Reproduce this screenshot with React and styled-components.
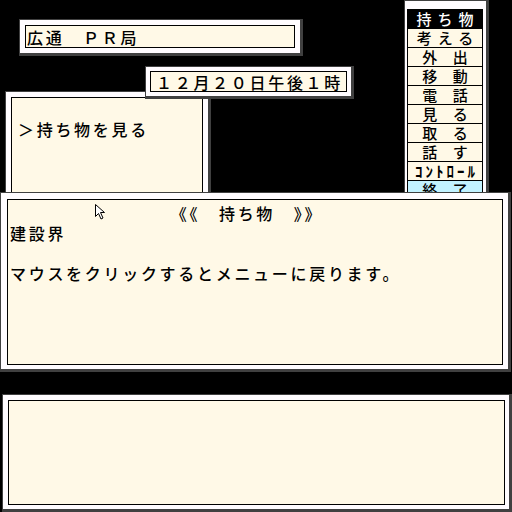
import React from 'react';
import styled, { createGlobalStyle } from 'styled-components';

const GlobalStyle = createGlobalStyle`
  html, body {
    margin: 0;
    padding: 0;
    background: #000;
  }
  body {
    font-family: "Noto Sans CJK JP", "Noto Sans", sans-serif;
  }
`;

const Desktop = styled.div`
  position: relative;
  width: 512px;
  height: 512px;
  background: #000;
  overflow: hidden;
`;

// a game window: white frame, dark shadow edge, cream panel inside
const Frame = styled.div`
  position: absolute;
  box-sizing: border-box;
  display: flex;
  background: #fffcff;
  border: 1px solid #404040;
  border-right-width: 3px;
  border-bottom-width: 3px;
  padding: ${p => p.$pad || '5px'};
`;

const Panel = styled.div`
  flex: 1;
  box-sizing: border-box;
  background: #fff9e7;
  border: 1px solid #000;
  color: #000;
  font-size: 16px;
  font-weight: 500;
  letter-spacing: 2.7px;
  line-height: 20px;
  display: flex;
  flex-direction: column;
  justify-content: ${p => (p.$center ? 'center' : 'flex-start')};
  padding: ${p => p.$pad || '0 0 0 1px'};
  white-space: pre;
`;

const Title = styled.div`
  text-align: center;
  padding-right: 18px;
`;

const Menu = styled.div`
  display: flex;
  flex-direction: column;
  flex: 1;
  border: 1px solid #000;
  border-bottom: none;
`;

const Item = styled.div`
  height: 18px;
  border-bottom: 1px solid #000;
  display: flex;
  align-items: center;
  justify-content: center;
  font-size: 15px;
  font-weight: ${p => (p.$tight ? 700 : 500)};
  line-height: 18px;
  letter-spacing: ${p => (p.$tight ? '3px' : '6px')};
  padding-left: ${p => (p.$tight ? '3px' : '6px')};
  white-space: pre;
  background: ${p => (p.$active ? '#000' : p.$exit ? '#c2f2ff' : '#fff9e7')};
  color: ${p => (p.$active ? '#fff' : '#000')};
`;

const Pointer = styled.svg`
  position: absolute;
  left: 95px;
  top: 204px;
`;

const menuItems = [
  { label: '持ち物', active: true },
  { label: '考える' },
  { label: '外 出' },
  { label: '移 動' },
  { label: '電 話' },
  { label: '見 る' },
  { label: '取 る' },
  { label: '話 す' },
  { label: 'ｺﾝﾄﾛｰﾙ', tight: true },
  { label: '終 了', exit: true },
];

export default function App() {
  return (
    <>
      <GlobalStyle />
      <Desktop>
        <Frame style={{ left: 19, top: 19, width: 284, height: 37 }}>
          <Panel $center>広通　ＰＲ局</Panel>
        </Frame>

        <Frame style={{ left: 5, top: 91, width: 206, height: 120 }}>
          <Panel $pad="21px 0 0 6px">＞持ち物を見る</Panel>
        </Frame>

        <Frame $pad="4px 4px 4px 4px" style={{ left: 145, top: 66, width: 209, height: 33 }}>
          <Panel $center $pad="0 0 0 5px">１２月２０日午後１時</Panel>
        </Frame>

        <Frame $pad="8px 3px 0 2px" style={{ left: 404, top: 0, width: 85, height: 200 }}>
          <Menu>
            {menuItems.map(m => (
              <Item key={m.label} $active={m.active} $exit={m.exit} $tight={m.tight}>
                {m.label}
              </Item>
            ))}
          </Menu>
        </Frame>

        <Frame $pad="6px 5px 4px 6px" style={{ left: 0, top: 192, width: 511, height: 180 }}>
          <Panel $pad="3px 0 0 2px">
            <Title>《《　持ち物　》》</Title>
            <div>建設界</div>
            <div> </div>
            <div>マウスをクリックするとメニューに戻ります。</div>
          </Panel>
        </Frame>

        <Frame $pad="5px 4px 4px 5px" style={{ left: 2, top: 394, width: 510, height: 118 }}>
          <Panel />
        </Frame>

        <Pointer width="11" height="16" viewBox="0 0 11 16">
          <path d="M0.5 0.5 L0.5 12.5 L3.5 9.5 L6 15 L8 14 L5.5 8.5 L9.5 8.5 Z" fill="#fff" stroke="#000" strokeWidth="1" />
        </Pointer>
      </Desktop>
    </>
  );
}
